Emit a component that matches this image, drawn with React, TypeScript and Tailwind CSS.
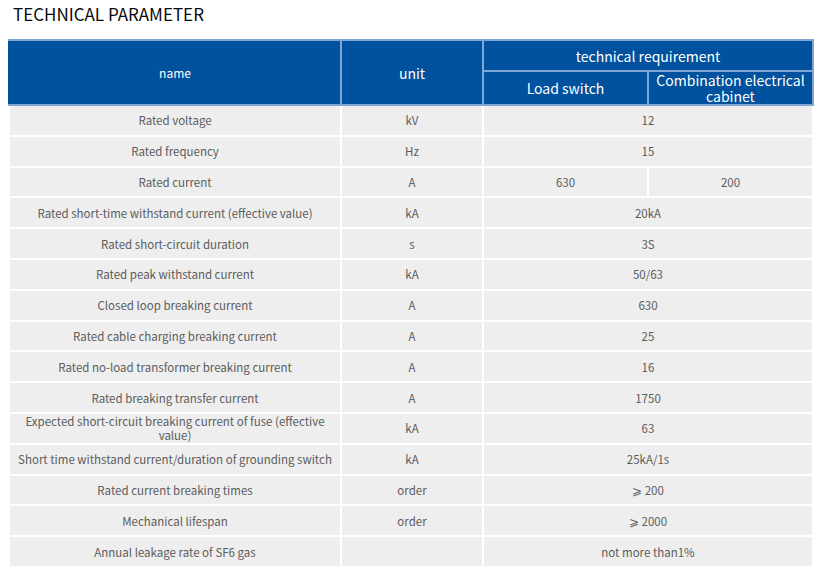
const rows: [string, string, string, string?][] = [
  ['Rated voltage', 'kV', '12'],
  ['Rated frequency', 'Hz', '15'],
  ['Rated current', 'A', '630', '200'],
  ['Rated short-time withstand current (effective value)', 'kA', '20kA'],
  ['Rated short-circuit duration', 's', '3S'],
  ['Rated peak withstand current', 'kA', '50/63'],
  ['Closed loop breaking current', 'A', '630'],
  ['Rated cable charging breaking current', 'A', '25'],
  ['Rated no-load transformer breaking current', 'A', '16'],
  ['Rated breaking transfer current', 'A', '1750'],
  ['Expected short-circuit breaking current of fuse (effective value)', 'kA', '63'],
  ['Short time withstand current/duration of grounding switch', 'kA', '25kA/1s'],
  ['Rated current breaking times', 'order', '\u2A7E 200'],
  ['Mechanical lifespan', 'order', '\u2A7E 2000'],
  ['Annual leakage rate of SF6 gas', '', 'not more than1%'],
];

const head = 'bg-[#00519e] text-white font-normal border-2 border-[#7fa6d2] text-center align-middle';
const cell = 'bg-[#eeeeee] border-2 border-white text-center align-middle';

export default function App() {
  return (
    <div className="bg-white w-[824px] h-[576px] font-['Noto_Sans_CJK_SC','Noto_Sans',sans-serif] text-[#5c5c5c]">
      <h2 className="pl-[13px] pt-[3px] text-[17px] leading-[22px] font-normal text-[#0a0a0a]">
        TECHNICAL PARAMETER
      </h2>
      <table className="ml-[8px] mt-[14px] w-[804px] border-collapse table-fixed text-[11.5px] leading-[14px]">
        <colgroup>
          <col className="w-[332px]" />
          <col className="w-[142px]" />
          <col className="w-[165px]" />
          <col className="w-[165px]" />
        </colgroup>
        <thead>
          <tr className="h-[31px]">
            <th rowSpan={2} className={`${head} border-l-[#00519e] text-[12px]`}>name</th>
            <th rowSpan={2} className={`${head} text-[14px]`}>unit</th>
            <th colSpan={2} className={`${head} text-[14px]`}>technical requirement</th>
          </tr>
          <tr className="h-[34px]">
            <th className={`${head} text-[14px]`}>Load switch</th>
            <th className={`${head} text-[14px] leading-[16px]`}>Combination electrical cabinet</th>
          </tr>
        </thead>
        <tbody>
          {rows.map(([name, unit, a, b]) => (
            <tr key={name} className="h-[30.8px]">
              <td className={`${cell} px-1`}>{name}</td>
              <td className={cell}>{unit}</td>
              {b ? (
                <>
                  <td className={cell}>{a}</td>
                  <td className={cell}>{b}</td>
                </>
              ) : (
                <td colSpan={2} className={cell}>{a}</td>
              )}
            </tr>
          ))}
        </tbody>
      </table>
    </div>
  );
}
